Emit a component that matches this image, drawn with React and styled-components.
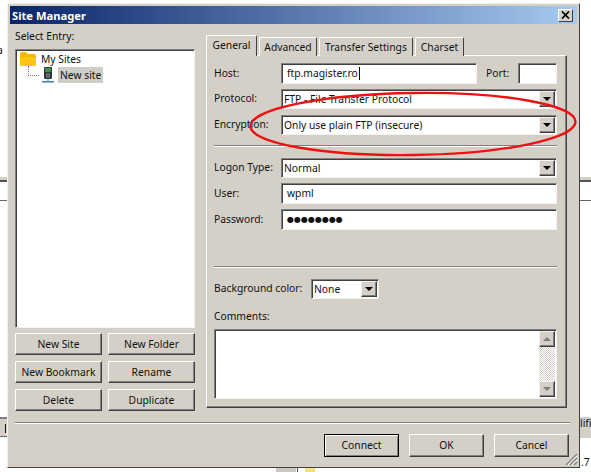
import React from 'react';
import styled, { createGlobalStyle } from 'styled-components';

const face = '#d4d0c8';

const GlobalStyle = createGlobalStyle`
  html, body {
    margin: 0;
    padding: 0;
    background: #fff;
  }
  body {
    font-family: "Noto Sans", "Liberation Sans", sans-serif;
    font-size: 10.3px;
    line-height: 13px;
    color: #111;
  }
`;

const Screen = styled.div`
  position: relative;
  width: 591px;
  height: 472px;
  overflow: hidden;
  padding: 3px 0 0 7px;
  box-sizing: border-box;
  background: #fff;
`;

// bits of the app window that peek out behind the dialog
const Behind = styled.div`
  position: absolute;
  left: ${p => p.$x}px;
  top: ${p => p.$y}px;
  width: ${p => p.$w}px;
  height: ${p => p.$h}px;
  background: ${p => p.$bg || 'transparent'};
  color: #111;
`;

const BehindLetter = styled.span`
  margin-left: -3px;
`;

const Dialog = styled.div`
  position: relative;
  z-index: 1;
  width: 573px;
  height: 465px;
  box-sizing: border-box;
  padding: 2px;
  background: ${face};
  border: 1px solid;
  border-color: #f4f3ef #404040 #404040 #f4f3ef;
`;

const TitleBar = styled.div`
  height: 18px;
  display: flex;
  align-items: center;
  justify-content: space-between;
  padding: 0 4px 0 2px;
  background: linear-gradient(90deg, #0a246a, #a6caf0);
  color: #fff;
  font-weight: 700;
  font-size: 11.2px;
`;

const CloseButton = styled.div`
  width: 15px;
  height: 13px;
  box-sizing: border-box;
  display: flex;
  align-items: center;
  justify-content: center;
  background: ${face};
  border: 1px solid;
  border-color: #fff #404040 #404040 #fff;
`;

const Main = styled.div`
  display: flex;
  height: 398px;
  padding-left: 5px;
  gap: 11px;
`;

const LeftColumn = styled.div`
  width: 180px;
  display: flex;
  flex-direction: column;
`;

const EntryLabel = styled.div`
  margin: 6px 0 6px;
`;

const sunken = `
  box-sizing: border-box;
  background: #fff;
  border: 1px solid;
  border-color: #808080 #f4f3ef #f4f3ef #808080;
  box-shadow: inset 1px 1px 0 #404040;
`;

const Tree = styled.div`
  ${sunken}
  height: 279px;
  padding: 1px 4px;
`;

const TreeRow = styled.div`
  display: flex;
  align-items: center;
  height: 16px;
  padding-left: ${p => p.$indent || 0}px;
`;

const Connector = styled.span`
  width: 10px;
  height: 9px;
  margin: -9px 3px 0 0;
  border-left: 1px dotted #777;
  border-bottom: 1px dotted #777;
`;

const NodeName = styled.span`
  margin-left: ${p => p.$gap}px;
  padding: 2px 2px 1px;
  background: ${p => (p.$selected ? '#cfcdc7' : 'transparent')};
`;

const SiteButtons = styled.div`
  display: grid;
  grid-template-columns: 87px 87px;
  grid-auto-rows: 22px;
  gap: 6px;
  margin-top: 5px;
`;

const Button = styled.div`
  box-sizing: border-box;
  display: flex;
  align-items: center;
  justify-content: center;
  background: ${face};
  border: 1px solid;
  border-color: #fff #404040 #404040 #fff;
  box-shadow: inset -1px -1px 0 #808080;
`;

const DefaultButton = styled(Button)`
  border-color: #000;
  box-shadow: inset 1px 1px 0 #fff, inset -1px -1px 0 #808080;
`;

const RightColumn = styled.div`
  width: 361px;
  padding-top: 11px;
`;

const Tabs = styled.div`
  display: flex;
  align-items: flex-end;
  height: 21px;
  gap: 2px;
  position: relative;
  z-index: 1;
`;

const Tab = styled.div`
  box-sizing: border-box;
  height: ${p => (p.$active ? 21 : 19)}px;
  width: ${p => p.$w}px;
  display: flex;
  align-items: center;
  justify-content: center;
  padding-bottom: ${p => (p.$active ? 2 : 0)}px;
  background: ${face};
  border: 1px solid;
  border-color: #fff #404040 ${face} #fff;
  border-radius: 2px 2px 0 0;
  border-bottom: 0;
`;

const Panel = styled.div`
  box-sizing: border-box;
  height: 353px;
  margin-top: -1px;
  padding: 7px 9px 0 7px;
  border: 1px solid;
  border-color: #fff #404040 #404040 #fff;
  box-shadow: inset -1px -1px 0 #808080;
`;

const Row = styled.div`
  display: flex;
  align-items: center;
  margin-top: ${p => p.$top || 0}px;
`;

const FieldLabel = styled.div`
  width: ${p => p.$w || 67}px;
  flex: none;
  padding-bottom: 1px;
`;

const Input = styled.div`
  ${sunken}
  flex: ${p => (p.$w ? 'none' : 1)};
  width: ${p => (p.$w ? `${p.$w}px` : 'auto')};
  height: 21px;
  display: flex;
  align-items: center;
  padding: 0 0 1px 5px;
`;

const Caret = styled.span`
  width: 1px;
  height: 13px;
  margin-left: 1px;
  background: #000;
`;

const Dots = styled.span`
  font-family: "DejaVu Sans", sans-serif;
  font-size: 8px;
  font-weight: 700;
`;

const PortLabel = styled.div`
  margin: 0 9px;
  padding-bottom: 1px;
`;

const Combo = styled.div`
  ${sunken}
  flex: ${p => (p.$w ? 'none' : 1)};
  width: ${p => (p.$w ? `${p.$w}px` : 'auto')};
  height: 20px;
  display: flex;
  align-items: center;
  justify-content: space-between;
  padding: 0 1px 0 2px;
`;

const ArrowButton = styled.div`
  box-sizing: border-box;
  width: 16px;
  height: 16px;
  display: flex;
  align-items: center;
  justify-content: center;
  background: ${face};
  border: 1px solid;
  border-color: #f4f3ef #404040 #404040 #f4f3ef;
  box-shadow: inset -1px -1px 0 #808080;
`;

const Arrow = styled.span`
  width: 0;
  height: 0;
  border-left: 4px solid transparent;
  border-right: 4px solid transparent;
  border-top: 4px solid ${p => p.$color || '#000'};
  transform: ${p => (p.$up ? 'rotate(180deg)' : 'none')};
`;

const Rule = styled.div`
  height: 0;
  margin-top: ${p => p.$top}px;
  border-top: 1px solid #808080;
  border-bottom: 1px solid #fff;
`;

const CommentsLabel = styled.div`
  margin: 11px 0 6px;
`;

const CommentsBox = styled.div`
  ${sunken}
  height: 70px;
  display: flex;
  justify-content: flex-end;
  padding: 1px 1px 1px 0;
`;

const Scrollbar = styled.div`
  width: 16px;
  display: flex;
  flex-direction: column;
  justify-content: space-between;
  background: repeating-conic-gradient(#fff 0 25%, ${face} 0 50%) 0 0 / 2px 2px;
`;

const Footer = styled.div`
  display: flex;
  flex-direction: column;
  padding-left: 5px;
`;

const FooterRule = styled.div`
  margin-right: 7px;
  border-top: 1px solid #808080;
  border-bottom: 1px solid #fff;
`;

const FooterButtons = styled.div`
  display: flex;
  justify-content: flex-end;
  gap: 10px;
  margin-top: 10px;
  padding-right: 8px;
`;

const FooterButton = styled(Button)`
  width: 75px;
  height: 23px;
  padding-bottom: 1px;
`;

const FooterDefault = styled(DefaultButton)`
  width: 75px;
  height: 23px;
  padding-bottom: 1px;
`;

const Grip = styled.svg`
  position: absolute;
  right: 1px;
  bottom: 1px;
`;

const Highlight = styled.svg`
  position: absolute;
  left: 0;
  top: 0;
  z-index: 2;
  pointer-events: none;
`;

const FolderIcon = () => (
  <svg width="17" height="15" viewBox="0 0 17 15">
    <path d="M0 2 L1 0 H6 L8 2 H15 L16 4 V13 L15 14 H1 L0 13 Z" fill="#f5b800" />
    <path d="M0 5 H16 V13 L15 14 H1 L0 13 Z" fill="#fbc516" />
  </svg>
);

const ServerIcon = () => (
  <svg width="12" height="16" viewBox="0 0 12 16">
    <rect x="2" y="0" width="8" height="12" rx="1" fill="#33383a" />
    <rect x="3" y="1" width="6" height="4" fill="#3f8f45" />
    <rect x="4" y="6" width="4" height="5" fill="#62686a" />
    <rect x="5.5" y="12" width="1" height="2" fill="#3b7fc4" />
    <rect x="0" y="14" width="12" height="1.5" fill="#3b7fc4" />
  </svg>
);

export default function App() {
  return (
    <Screen>
      <GlobalStyle />
      <Behind $x={0} $y={44} $w={7} $h={13}>
        <BehindLetter>a</BehindLetter>
      </Behind>
      <Behind $x={0} $y={177} $w={7} $h={3} $bg="#d4d0c8" />
      <Behind $x={0} $y={180} $w={7} $h={2} $bg="#555" />
      <Behind $x={0} $y={200} $w={7} $h={1} $bg="#666" />
      <Behind $x={580} $y={177} $w={11} $h={3} $bg="#d4d0c8" />
      <Behind $x={580} $y={180} $w={11} $h={2} $bg="#555" />
      <Behind $x={580} $y={200} $w={11} $h={1} $bg="#666" />
      <Behind $x={0} $y={417} $w={7} $h={2} $bg="#808080" />
      <Behind $x={0} $y={419} $w={7} $h={17} $bg="#d4d0c8" />
      <Behind $x={5} $y={424} $w={1} $h={9} $bg="#111" />
      <Behind $x={0} $y={436} $w={7} $h={1} $bg="#666" />
      <Behind $x={580} $y={417} $w={11} $h={21} $bg="#d4d0c8">lifi</Behind>
      <Behind $x={581} $y={456} $w={10} $h={13}>.7</Behind>
      <Behind $x={276} $y={468} $w={20} $h={4} $bg="#c9c7c0" />
      <Behind $x={297} $y={468} $w={1} $h={4} $bg="#555" />
      <Behind $x={305} $y={468} $w={10} $h={4} $bg="#f3e27a" />

      <Dialog>
        <TitleBar>
          <span>Site Manager</span>
          <CloseButton>
            <svg width="9" height="8" viewBox="0 0 9 8">
              <path d="M1 0.5 L8 7.5 M8 0.5 L1 7.5" stroke="#000" strokeWidth="1.7" />
            </svg>
          </CloseButton>
        </TitleBar>

        <Main>
          <LeftColumn>
            <EntryLabel>Select Entry:</EntryLabel>
            <Tree>
              <TreeRow>
                <FolderIcon />
                <NodeName $gap={2}>My Sites</NodeName>
              </TreeRow>
              <TreeRow $indent={8}>
                <Connector />
                <ServerIcon />
                <NodeName $gap={4} $selected>New site</NodeName>
              </TreeRow>
            </Tree>
            <SiteButtons>
              <Button>New Site</Button>
              <Button>New Folder</Button>
              <Button>New Bookmark</Button>
              <Button>Rename</Button>
              <Button>Delete</Button>
              <Button>Duplicate</Button>
            </SiteButtons>
          </LeftColumn>

          <RightColumn>
            <Tabs>
              <Tab $active $w={51}>General</Tab>
              <Tab $w={58}>Advanced</Tab>
              <Tab $w={94}>Transfer Settings</Tab>
              <Tab $w={49}>Charset</Tab>
            </Tabs>
            <Panel>
              <Row>
                <FieldLabel>Host:</FieldLabel>
                <Input $w={196}>ftp.magister.ro<Caret /></Input>
                <PortLabel>Port:</PortLabel>
                <Input />
              </Row>
              <Row $top={5}>
                <FieldLabel>Protocol:</FieldLabel>
                <Combo>FTP - File Transfer Protocol<ArrowButton><Arrow /></ArrowButton></Combo>
              </Row>
              <Row $top={6}>
                <FieldLabel>Encryption:</FieldLabel>
                <Combo>Only use plain FTP (insecure)<ArrowButton><Arrow /></ArrowButton></Combo>
              </Row>
              <Rule $top={10} />
              <Row $top={11}>
                <FieldLabel>Logon Type:</FieldLabel>
                <Combo>Normal<ArrowButton><Arrow /></ArrowButton></Combo>
              </Row>
              <Row $top={5}>
                <FieldLabel>User:</FieldLabel>
                <Input>wpml</Input>
              </Row>
              <Row $top={5}>
                <FieldLabel>Password:</FieldLabel>
                <Input><Dots>●●●●●●●●</Dots></Input>
              </Row>
              <Rule $top={36} />
              <Row $top={11}>
                <FieldLabel $w={97}>Background color:</FieldLabel>
                <Combo $w={68}>None<ArrowButton><Arrow /></ArrowButton></Combo>
              </Row>
              <CommentsLabel>Comments:</CommentsLabel>
              <CommentsBox>
                <Scrollbar>
                  <ArrowButton><Arrow $up $color="#808080" /></ArrowButton>
                  <ArrowButton><Arrow $color="#808080" /></ArrowButton>
                </Scrollbar>
              </CommentsBox>
            </Panel>
          </RightColumn>
        </Main>

        <Footer>
          <FooterRule />
          <FooterButtons>
            <FooterDefault>Connect</FooterDefault>
            <FooterButton>OK</FooterButton>
            <FooterButton>Cancel</FooterButton>
          </FooterButtons>
        </Footer>

        <Grip width="13" height="13" viewBox="0 0 13 13">
          <path d="M12 1 L1 12 M12 5 L5 12 M12 9 L9 12" stroke="#808080" strokeWidth="1.2" />
          <path d="M12 3 L3 12 M12 7 L7 12" stroke="#fff" strokeWidth="1" />
        </Grip>
      </Dialog>

      <Highlight width="591" height="472" viewBox="0 0 591 472">
        <ellipse cx="413" cy="124" rx="162.5" ry="31" fill="none" stroke="#ee1111" strokeWidth="2.4" transform="rotate(-0.8 413 124)" />
      </Highlight>
    </Screen>
  );
}
